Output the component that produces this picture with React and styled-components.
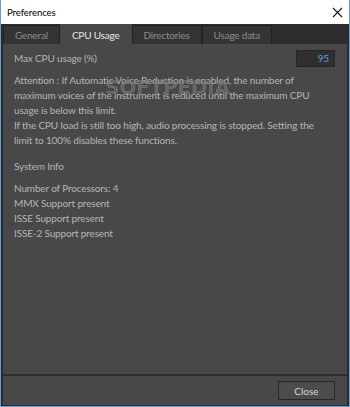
import React, { useState } from 'react';
import styled, { createGlobalStyle } from 'styled-components';

const GlobalStyle = createGlobalStyle`
  html, body {
    margin: 0;
    padding: 0;
    background: #ffffff;
  }
  body {
    font-family: Lato, "Open Sans", sans-serif;
  }
`;

const Window = styled.div`
  box-sizing: border-box;
  width: 350px;
  height: 407px;
  border: 1px solid #5f9fd6;
  border-top: none;
  display: flex;
  flex-direction: column;
  background: #2c2c2c;
`;

const TitleBar = styled.div`
  height: 24px;
  background: #ffffff;
  display: flex;
  align-items: center;
  justify-content: space-between;
  padding: 0 6px 0 6px;
  flex-shrink: 0;
`;

const Title = styled.span`
  font-size: 9.6px;
  letter-spacing: -0.1px;
  color: #000000;
`;

const Body = styled.div`
  flex: 1;
  display: flex;
  flex-direction: column;
  padding: 0 2px 1px 2px;
  gap: 2px;
  min-height: 0;
`;

const TabStrip = styled.div`
  display: flex;
  align-items: flex-end;
  height: 20px;
  flex-shrink: 0;
  margin-bottom: -2px;
`;

const Tab = styled.div`
  box-sizing: border-box;
  height: ${p => (p.$active ? '20px' : '19px')};
  padding: 0 11px;
  display: flex;
  align-items: center;
  font-size: 10px;
  letter-spacing: -0.2px;
  color: ${p => (p.$active ? '#e6e6e6' : '#8c8c8c')};
  background: ${p => (p.$active ? '#484848' : '#343434')};
  border: 1px solid ${p => (p.$active ? '#484848' : '#222222')};
  border-bottom: none;
  cursor: default;
  position: relative;
  z-index: ${p => (p.$active ? 1 : 0)};
`;

const Panel = styled.div`
  flex: 1;
  background: #484848;
  padding: 6px 12px 0 11px;
  display: flex;
  flex-direction: column;
  color: #b5b5b5;
  font-size: 10px;
  letter-spacing: -0.15px;
  line-height: 15px;
  white-space: nowrap;
  position: relative;
  overflow: hidden;
`;

const Row = styled.div`
  display: flex;
  align-items: center;
  justify-content: space-between;
  height: 17px;
`;

const NumberBox = styled.div`
  box-sizing: border-box;
  width: 39px;
  height: 17px;
  background: #2f2f2f;
  border: 1px solid #252525;
  color: #5a9fd8;
  text-align: right;
  padding-right: 5px;
  line-height: 15px;
`;

const Paragraph = styled.p`
  margin: ${p => p.$top || 0}px 0 0 0;
`;

const Watermark = styled.div`
  position: absolute;
  left: 102px;
  top: 33px;
  font-family: "DejaVu Sans", sans-serif;
  font-weight: bold;
  font-size: 20px;
  line-height: 1;
  letter-spacing: -0.2px;
  color: rgba(255, 255, 255, 0.3);
  text-shadow: 0 0 1px rgba(0, 0, 0, 0.4);
  pointer-events: none;
`;

const Footer = styled.div`
  height: 29px;
  flex-shrink: 0;
  background: #484848;
  display: flex;
  align-items: center;
  justify-content: flex-end;
  padding-right: 12px;
`;

const Button = styled.button`
  box-sizing: border-box;
  width: 57px;
  height: 19px;
  background: #4c4c4c;
  border: 1px solid #272727;
  color: #d4d4d4;
  font-family: inherit;
  font-size: 10px;
  padding: 0;
  cursor: pointer;
`;

const CloseX = () => (
  <svg width="11" height="11" viewBox="0 0 11 11">
    <path d="M1 1 L10 10 M10 1 L1 10" stroke="#1a1a1a" strokeWidth="1.1" />
  </svg>
);

const tabs = ['General', 'CPU Usage', 'Directories', 'Usage data'];

const attention = [
  'Attention : If Automatic Voice Reduction is enabled, the number of',
  'maximum voices of the instrument is reduced until the maximum CPU',
  'usage is below this limit.',
  'If the CPU load is still too high, audio processing is stopped. Setting the',
  'limit to 100% disables these functions.',
];

const info = [
  'Number of Processors: 4',
  'MMX Support present',
  'ISSE Support present',
  'ISSE-2 Support present',
];

const Lines = ({ lines }) =>
  lines.map(line => (
    <React.Fragment key={line}>
      {line}
      <br />
    </React.Fragment>
  ));

export default function App() {
  const [active, setActive] = useState('CPU Usage');

  return (
    <>
      <GlobalStyle />
      <Window>
        <TitleBar>
          <Title>Preferences</Title>
          <CloseX />
        </TitleBar>
        <Body>
          <TabStrip>
            {tabs.map(t => (
              <Tab key={t} $active={t === active} onClick={() => setActive(t)}>
                {t}
              </Tab>
            ))}
          </TabStrip>
          <Panel>
            <Row>
              <span>Max CPU usage (%)</span>
              <NumberBox>95</NumberBox>
            </Row>
            <Paragraph $top={6}>
              <Lines lines={attention} />
            </Paragraph>
            <Paragraph $top={11}>System Info</Paragraph>
            <Paragraph $top={7}>
              <Lines lines={info} />
            </Paragraph>
            <Watermark>SOFTPEDIA</Watermark>
          </Panel>
          <Footer>
            <Button>Close</Button>
          </Footer>
        </Body>
      </Window>
    </>
  );
}
